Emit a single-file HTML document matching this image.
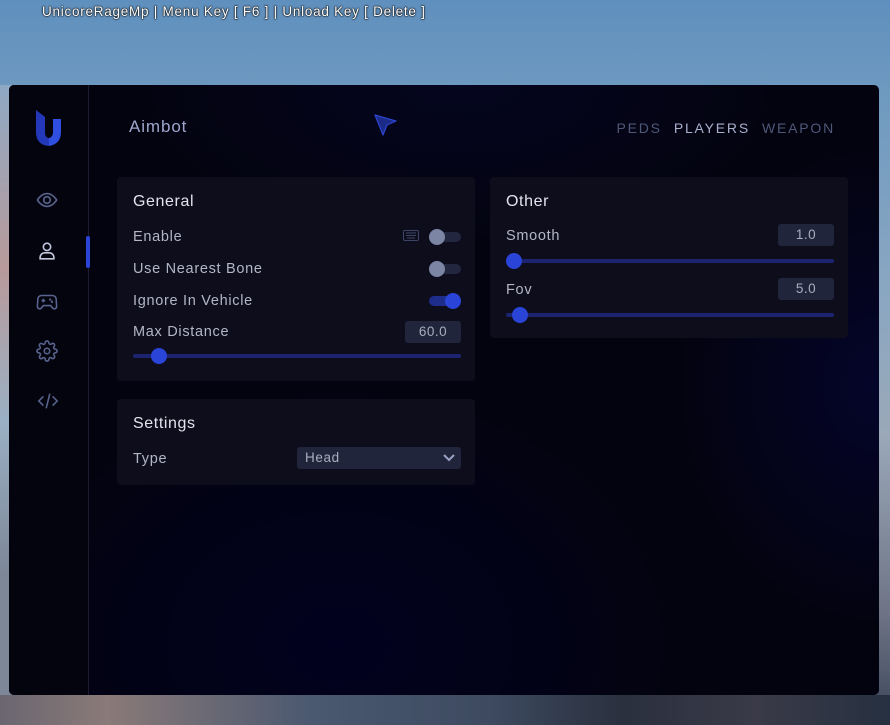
<!DOCTYPE html>
<html><head><meta charset="utf-8"><style>
*{margin:0;padding:0;box-sizing:border-box}
body{width:890px;height:725px;overflow:hidden;position:relative;font-family:"Liberation Sans","DejaVu Sans",sans-serif;
background:linear-gradient(180deg,#5f8fbd 0%,#6d99c0 12%,#8aa7c2 40%,#9aa8b8 60%,#6d7384 85%,#3a4458 100%);}
.bgl{position:absolute;left:0;top:85px;width:12px;height:610px;background:linear-gradient(180deg,#8fa9c4,#b89a9a 30%,#9ab0c4 55%,#7d8798 80%)}
.bgb{position:absolute;left:0;top:695px;width:890px;height:30px;background:linear-gradient(90deg,#6a6670,#8a7a78 12%,#4a5870 35%,#3d4a60 55%,#2a303e 70%,#3a3a48 85%,#263040)}
.top{position:absolute;left:42px;top:4px;color:#fff;font-size:13.5px;letter-spacing:0.75px;text-shadow:0 0 2px #000,0 0 1px #000,0 0 1px #000}
.panel{position:absolute;left:9px;top:85px;width:870px;height:610px;border-radius:5px;overflow:hidden;
background:radial-gradient(ellipse 450px 350px at 330px 560px,#01011f 0%,rgba(1,1,25,0) 75%),radial-gradient(ellipse 250px 300px at 870px 300px,#05052a 0%,rgba(5,5,30,0) 80%),radial-gradient(ellipse 400px 200px at 450px 0px,#05061f 0%,rgba(6,6,30,0) 80%),#030310}
.side{position:absolute;left:0;top:0;width:80px;height:610px;background:#04040f;border-right:1px solid #1a1d30}
.ind{position:absolute;left:77px;top:151px;width:4px;height:32px;background:#2a44d8;border-radius:2px}
.ic{position:absolute;left:27px}
.title{position:absolute;left:120px;top:32px;color:#9ea6cc;font-size:17px;letter-spacing:0.9px}
.tabs{position:absolute;right:44px;top:35px;font-size:14px;letter-spacing:1.8px;color:#4f5878}
.tabs span{margin-left:12px}
.card{position:absolute;background:#0d0d1c;border-radius:4px}
.h{position:absolute;left:16px;color:#e4e4ee;font-size:16px;letter-spacing:0.6px}
.l{position:absolute;left:16px;color:#b3b6c6;font-size:14.5px;letter-spacing:0.7px}
.tg{position:absolute;width:32px;height:10px;border-radius:5px;background:#22263e}
.tg i{position:absolute;top:-3px;width:16px;height:16px;border-radius:50%}
.val{position:absolute;width:56px;height:22px;background:#20253c;border-radius:3px;color:#a8adc0;font-size:13.5px;text-align:center;line-height:22px;letter-spacing:0.5px}
.tr{position:absolute;height:4px;background:#1c2470;border-radius:2px}
.kn{position:absolute;width:16px;height:16px;border-radius:50%;background:#2a44d8;top:-6px}
</style></head><body>
<div class="bgl"></div><div class="bgb"></div>
<div class="top">UnicoreRageMp | Menu Key [ F6 ] | Unload Key [ Delete ]</div>
<div class="panel">
 <div class="side">
  <svg style="position:absolute;left:27px;top:25px" width="26" height="36" viewBox="0 0 26 36"><path d="M0 0 L9 7 L9 22 Q9 28 13 28 L13 36 Q0 35 0 22 Z" fill="#2338b8"/><path d="M17 9 L25 9 L25 22 Q25 34 13 36 L13 28 Q17 27 17 22 Z" fill="#2f4fe0"/></svg>
  <svg class="ic" style="top:104px" width="22" height="22" viewBox="0 0 24 24" fill="none" stroke="#59648e" stroke-width="1.8"><path d="M1.5 12S5.5 5 12 5s10.5 7 10.5 7-4 7-10.5 7S1.5 12 1.5 12z"/><circle cx="12" cy="12" r="3.6"/></svg>
  <svg class="ic" style="top:155px" width="22" height="22" viewBox="0 0 24 24" fill="none" stroke="#c0c6dc" stroke-width="1.8"><circle cx="12" cy="7.5" r="4"/><path d="M4.5 20.5v-1.5a5 5 0 0 1 5-5h5a5 5 0 0 1 5 5v1.5z"/></svg>
  <svg class="ic" style="top:205px" width="22" height="22" viewBox="0 0 24 24" fill="none" stroke="#59648e" stroke-width="1.7"><path d="M6 6h12a4 4 0 0 1 4 4l0.5 8a2.5 2.5 0 0 1-4.5 1.5L16 17H8l-2 2.5A2.5 2.5 0 0 1 1.5 18L2 10a4 4 0 0 1 4-4z"/><path d="M6 11.5h4M8 9.5v4"/><circle cx="15.5" cy="10.5" r=".5"/><circle cx="17.5" cy="13" r=".5"/></svg>
  <svg class="ic" style="top:255px" width="22" height="22" viewBox="0 0 24 24" fill="none" stroke="#59648e" stroke-width="1.7"><circle cx="12" cy="12" r="3"/><path d="M19.4 15a1.65 1.65 0 0 0 .33 1.82l.06.06a2 2 0 1 1-2.830 2.83l-.06-.06a1.65 1.65 0 0 0-1.82-.33 1.65 1.65 0 0 0-1 1.51V21a2 2 0 1 1-4 0v-.09A1.65 1.65 0 0 0 9 19.4a1.65 1.65 0 0 0-1.82.33l-.06.06a2 2 0 1 1-2.83-2.83l.06-.06A1.65 1.65 0 0 0 4.6 15a1.65 1.65 0 0 0-1.51-1H3a2 2 0 1 1 0-4h.09A1.65 1.65 0 0 0 4.6 9a1.65 1.65 0 0 0-.33-1.82l-.06-.06a2 2 0 1 1 2.83-2.83l.06.06A1.65 1.65 0 0 0 9 4.6a1.65 1.65 0 0 0 1-1.51V3a2 2 0 1 1 4 0v.09a1.65 1.65 0 0 0 1 1.510 1.65 1.65 0 0 0 1.82-.33l.06-.06a2 2 0 1 1 2.83 2.83l-.06.06A1.65 1.65 0 0 0 19.4 9a1.65 1.65 0 0 0 1.51 1H21a2 2 0 1 1 0 4h-.09a1.65 1.65 0 0 0-1.51 1z"/></svg>
  <svg class="ic" style="top:305px" width="24" height="22" viewBox="0 0 24 24" fill="none" stroke="#59648e" stroke-width="1.7"><path d="M7 7l-5 5 5 5M17 7l5 5-5 5M14 4l-4 16"/></svg>
 </div>
 <div class="ind"></div>
 <div class="title">Aimbot</div>
 <svg style="position:absolute;left:364px;top:28px" width="24" height="24" viewBox="0 0 24 24"><path d="M2 2L23 8L14 12L10 22Z" fill="#1c2a88" stroke="#2c46d0" stroke-width="1.2" stroke-linejoin="round"/></svg>
 <div class="tabs"><span>PEDS</span><span style="color:#a9b0cc">PLAYERS</span><span>WEAPON</span></div>

 <div class="card" style="left:108px;top:92px;width:358px;height:204px">
  <div class="h" style="top:16px">General</div>
  <div class="l" style="top:52px">Enable</div>
  <svg style="position:absolute;left:286px;top:53px" width="16" height="11" viewBox="0 0 16 11"><rect x=".5" y=".5" width="15" height="10" rx="1.5" fill="none" stroke="#3d4566"/><path d="M3 3h10M3 5.5h10M4 8h8" stroke="#3d4566"/></svg>
  <div class="tg" style="left:312px;top:55px"><i style="left:0;background:#7c85a3"></i></div>
  <div class="l" style="top:84px">Use Nearest Bone</div>
  <div class="tg" style="left:312px;top:87px"><i style="left:0;background:#7c85a3"></i></div>
  <div class="l" style="top:116px">Ignore In Vehicle</div>
  <div class="tg" style="left:312px;top:119px;background:#1e2c8a"><i style="left:16px;background:#2a44d8"></i></div>
  <div class="l" style="top:147px">Max Distance</div>
  <div class="val" style="left:288px;top:144px">60.0</div>
  <div class="tr" style="left:16px;top:177px;width:328px"><div class="kn" style="left:18px"></div></div>
 </div>

 <div class="card" style="left:108px;top:314px;width:358px;height:86px">
  <div class="h" style="top:16px">Settings</div>
  <div class="l" style="top:52px">Type</div>
  <div style="position:absolute;left:180px;top:48px;width:164px;height:22px;background:#20253c;border-radius:3px;color:#a8adc0;font-size:13.5px;line-height:22px;padding-left:8px;letter-spacing:0.6px">Head
   <svg style="position:absolute;right:6px;top:7px" width="12" height="8" viewBox="0 0 12 8"><path d="M1 1l5 5 5-5" fill="none" stroke="#9aa3c4" stroke-width="2"/></svg></div>
 </div>

 <div class="card" style="left:481px;top:92px;width:358px;height:161px">
  <div class="h" style="top:16px">Other</div>
  <div class="l" style="top:51px">Smooth</div>
  <div class="val" style="left:288px;top:47px">1.0</div>
  <div class="tr" style="left:16px;width:328px;top:82px"><div class="kn" style="left:0"></div></div>
  <div class="l" style="top:105px">Fov</div>
  <div class="val" style="left:288px;top:101px">5.0</div>
  <div class="tr" style="left:16px;top:136px;width:328px"><div class="kn" style="left:6px"></div></div>
 </div>
</div>
</body></html>
